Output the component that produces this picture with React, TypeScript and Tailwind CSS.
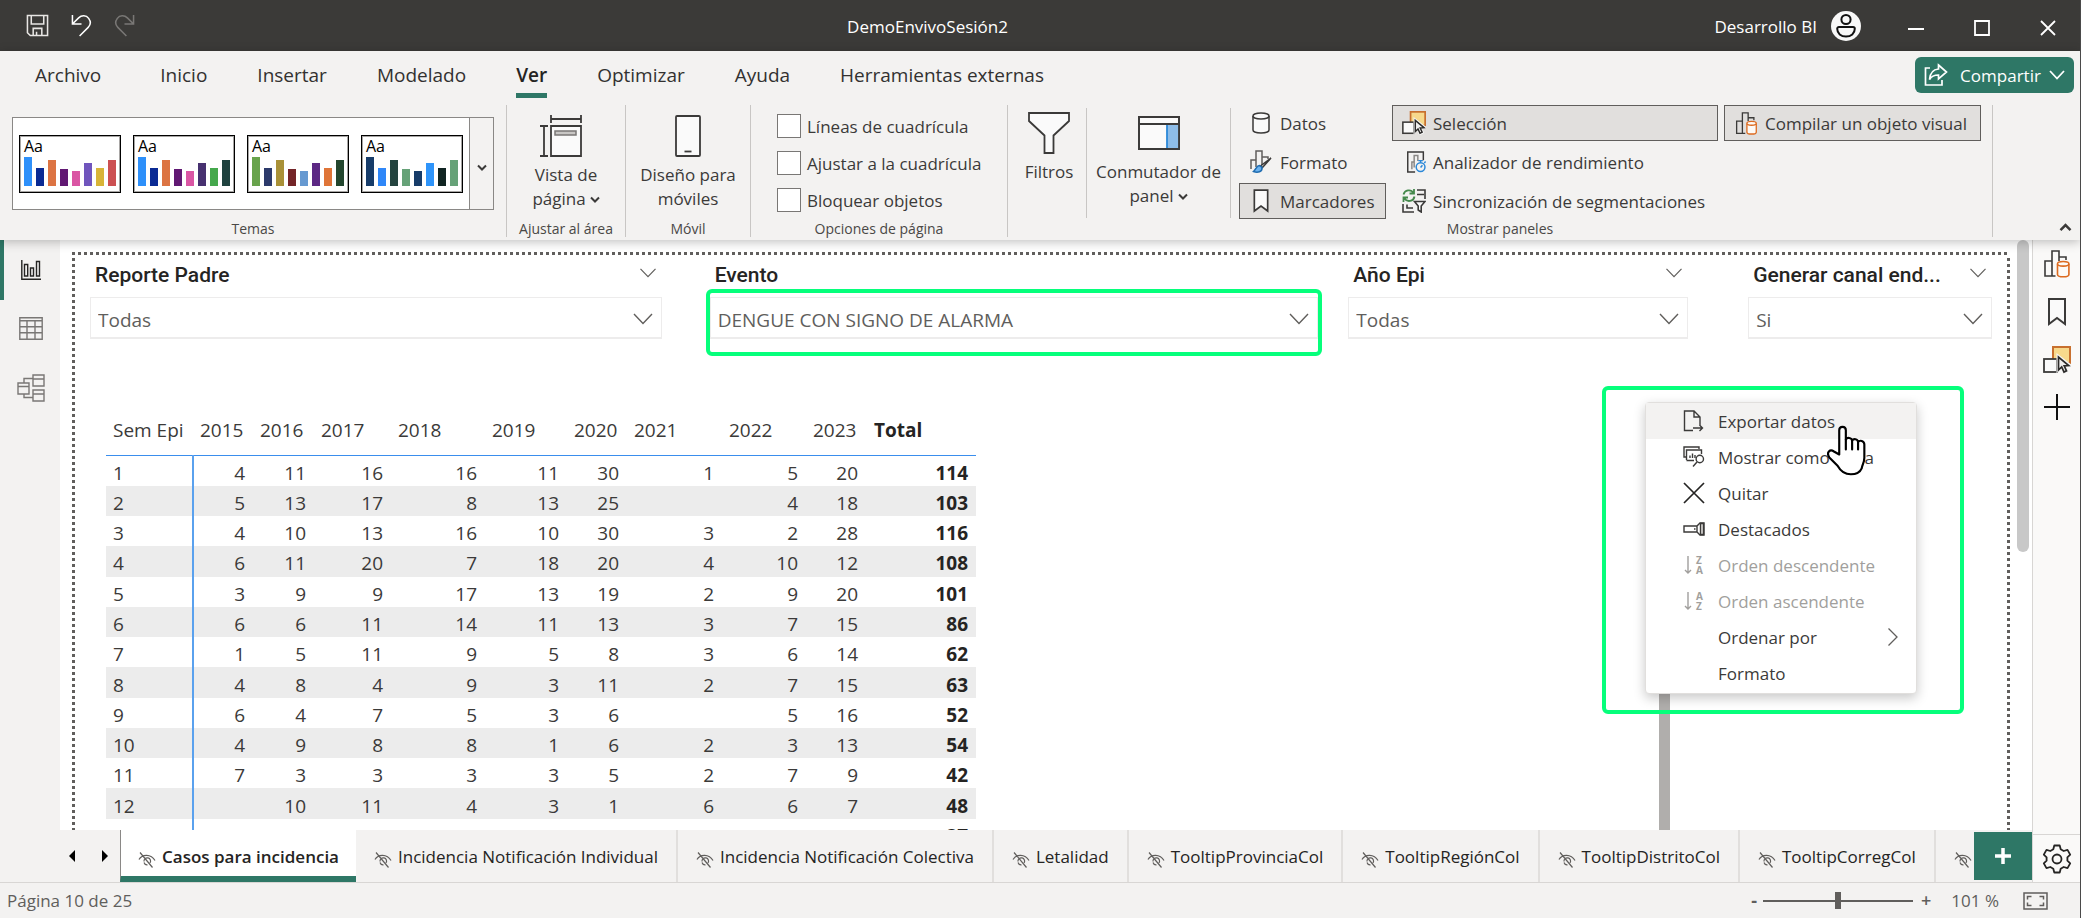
import type { ReactNode } from "react";

const THEMES = [
  ["#2e90fa", "#0a2a94", "#dc7443", "#611873", "#da56a4", "#7055bd", "#d8b438", "#cc5052"],
  ["#2e90fa", "#0a2a94", "#dc7443", "#611873", "#da56a4", "#473170", "#45a84c", "#1f423f"],
  ["#68a34c", "#2c3a6b", "#a99138", "#732428", "#6699d1", "#5c2884", "#df7538", "#23462e"],
  ["#173c69", "#2f87f8", "#24443f", "#66a278", "#173c69", "#2e94fa", "#102422", "#66a278"],
];
const BAR_HEIGHTS = [29, 18, 26, 17, 15, 23, 18, 26];

const MENU_TABS = ["Inicio", "Insertar", "Modelado", "Ver", "Optimizar", "Ayuda", "Herramientas externas"];

const YEARS = ["2015", "2016", "2017", "2018", "2019", "2020", "2021", "2022", "2023"];
const ROWS: string[][] = [
  ["1", "4", "11", "16", "16", "11", "30", "1", "5", "20", "114"],
  ["2", "5", "13", "17", "8", "13", "25", "", "4", "18", "103"],
  ["3", "4", "10", "13", "16", "10", "30", "3", "2", "28", "116"],
  ["4", "6", "11", "20", "7", "18", "20", "4", "10", "12", "108"],
  ["5", "3", "9", "9", "17", "13", "19", "2", "9", "20", "101"],
  ["6", "6", "6", "11", "14", "11", "13", "3", "7", "15", "86"],
  ["7", "1", "5", "11", "9", "5", "8", "3", "6", "14", "62"],
  ["8", "4", "8", "4", "9", "3", "11", "2", "7", "15", "63"],
  ["9", "6", "4", "7", "5", "3", "6", "", "5", "16", "52"],
  ["10", "4", "9", "8", "8", "1", "6", "2", "3", "13", "54"],
  ["11", "7", "3", "3", "3", "3", "5", "2", "7", "9", "42"],
  ["12", "", "10", "11", "4", "3", "1", "6", "6", "7", "48"],
  ["13", "1", "6", "8", "2", "4", "1", "1", "5", "9", "37"],
];

const PAGES = [
  "Incidencia Notificación Individual",
  "Incidencia Notificación Colectiva",
  "Letalidad",
  "TooltipProvinciaCol",
  "TooltipRegiónCol",
  "TooltipDistritoCol",
  "TooltipCorregCol",
];

function Caret({ className = "" }: { className?: string }) {
  return (
    <svg viewBox="0 0 10 8" className={className} fill="none" stroke="#3b3a39" strokeWidth="2">
      <path d="M1 1.500 5 5.500 9 1.500" />
    </svg>
  );
}

function Chevron({ className = "" }: { className?: string }) {
  return (
    <svg viewBox="0 0 20 12" className={className} fill="none" stroke="#605e5c" strokeWidth="1.400">
      <path d="M1 1 10 10.500 19 1" />
    </svg>
  );
}

function BookmarkIcon({ className = "" }: { className?: string }) {
  return (
    <svg viewBox="0 0 24 28" className={className} fill="#fafafa" stroke="#3b3a39" strokeWidth="2">
      <path d="M4 1h16v25l-8-6-8 6z" />
    </svg>
  );
}

function BuildIcon({ className = "" }: { className?: string }) {
  return (
    <svg viewBox="0 0 28 28" className={className} fill="none" stroke="#3b3a39" strokeWidth="1.600">
      <path d="M12.500 26H2V11h7M9 26V1h7v10M16 7h7v3" />
      <path d="M14.500 14v10.500c0 1.400 2.400 2.300 5.700 2.300s5.700-.9 5.700-2.300V14" fill="#fdfaf6" stroke="#dd6b20" />
      <ellipse cx="20.200" cy="13.800" rx="5.700" ry="2.300" fill="#fdfaf6" stroke="#dd6b20" />
    </svg>
  );
}

function SelectionIcon({ className = "" }: { className?: string }) {
  return (
    <svg viewBox="0 0 28 28" className={className}>
      <rect x="10" y="1" width="17" height="16" fill="#f7d98c" stroke="#c8702f" strokeWidth="2" />
      <rect x="1" y="13" width="13" height="13" fill="#fafafa" stroke="#3b3a39" strokeWidth="1.800" />
      <path d="M15 10v14l3.400-3 2.600 5.500 3-1.500-2.500-5.500 5-.5z" fill="#f5f5f4" stroke="#f5f5f4" strokeWidth="3" />
      <path d="M15.500 11v13l3.200-3 2.300 5 2.500-1.200-2.300-5 4.500-.3z" fill="#f0efee" stroke="#2b2a29" strokeWidth="1.700" />
    </svg>
  );
}

function HiddenPageIcon() {
  return (
    <svg viewBox="0 0 18 16" className="mt-1.5 h-4 w-[18px] shrink-0" fill="none" stroke="#605e5c" strokeWidth="1.200">
      <path d="M1 7.500C4 2 13 1.500 17 8.500M6 9.500a3.300 3.300 0 1 1 6 1.500M2 .5l12.500 15M6 10.500a3.300 3.300 0 0 0 3.500 2.300" />
    </svg>
  );
}

function Group({ label, className = "", children }: { label: string; className?: string; children: ReactNode }) {
  return (
    <section className={`flex h-[132px] flex-col justify-between border-r border-[#c8c6c4] ${className}`}>
      <div className="flex">{children}</div>
      <h2 className="text-center text-sm leading-4 text-[#4a4846]">{label}</h2>
    </section>
  );
}

function BigButton({ icon, children, className = "" }: { icon: ReactNode; children: ReactNode; className?: string }) {
  return (
    <button className={`flex flex-col items-center text-center text-[17px] leading-6 ${className}`}>
      {icon}
      <span>{children}</span>
    </button>
  );
}

function PanelButton({ icon, children, active, className = "" }: { icon: ReactNode; children: ReactNode; active?: boolean; className?: string }) {
  return (
    <button
      className={`flex h-9 items-center gap-1.5 border pl-2 text-[17px] whitespace-nowrap ${active ? "border-[#605e5c] bg-[#e1dfdd]" : "border-transparent"} ${className}`}
    >
      <span className="flex w-[26px] justify-center">{icon}</span>
      <span className="pt-0.5">{children}</span>
    </button>
  );
}

function Slicer({ id, title, value, className = "", highlighted }: { id: string; title: string; value: string; className?: string; highlighted?: boolean }) {
  return (
    <div className={className}>
      <div className="flex h-[42px] items-center justify-between pr-[5px] pl-[5px]">
        <label htmlFor={id} className="truncate font-[Roboto,sans-serif] text-[21px] font-medium text-[#252423]">
          {title}
        </label>
        {!highlighted && (
          <button aria-label={`Opciones de ${title}`}>
            <Chevron className="mb-1.5 h-2.5 w-[18px]" />
          </button>
        )}
      </div>
      <div className="relative">
        <select id={id} className="h-[42px] w-full appearance-none rounded-none border border-b-2 border-[#edecec] bg-white pt-1.5 pl-[7px] text-[19px] text-[#605e5c]">
          <option>{value}</option>
        </select>
        <Chevron className="pointer-events-none absolute top-4 right-[9px] h-3 w-5" />
        {highlighted && <div className="pointer-events-none absolute -inset-x-1 -top-2 h-[67px] rounded-md border-4 border-[#06ff7b]" />}
      </div>
    </div>
  );
}

function MenuItem({ icon, children, className = "", arrow }: { icon?: ReactNode; children: ReactNode; className?: string; arrow?: boolean }) {
  return (
    <button role="menuitem" className={`flex h-9 w-full items-center pl-[37px] text-left text-[17px] ${className}`}>
      <span className="flex w-[35px] shrink-0">{icon}</span>
      <span className="pt-0.5">{children}</span>
      {arrow && (
        <svg viewBox="0 0 12 20" className="mr-[17px] ml-auto h-5 w-3" fill="none" stroke="#605e5c" strokeWidth="1.300">
          <path d="m1.500 1.500 8.500 8.500-8.500 8.500" />
        </svg>
      )}
    </button>
  );
}

function SortIcon({ top, bottom }: { top: string; bottom: string }) {
  return (
    <span className="flex items-center gap-1 pl-px text-[#a19f9d]">
      <svg viewBox="0 0 8 20" className="h-5 w-2" fill="none" stroke="currentColor" strokeWidth="1.400">
        <path d="M4 1v17M1 15l3 3 3-3" />
      </svg>
      <span className="flex flex-col text-[10px] leading-[10px] font-bold">
        <span>{top}</span>
        <span>{bottom}</span>
      </span>
    </span>
  );
}

function HandCursor() {
  return (
    <svg viewBox="0 0 118 152" className="absolute top-[22px] left-[181px] h-[51px] w-[39px]" fill="#fff" stroke="#000" strokeWidth="6.500" strokeLinejoin="round" strokeLinecap="round">
      <path d="M37 88V15c0-14 20-14 20 0v28c3-8 18-6 19 3 4-7 17-5 18 4 5-6 19-4 19 8v40c0 14-6 20-8 32-6 14-18 18-33 18-18 0-30-8-40-26L7 97c-10-16 2-26 14-18z" />
      <path d="M57 43v30M76 46v27M94 50v23" />
    </svg>
  );
}

function TitleBar() {
  return (
    <header className="flex h-[51px] shrink-0 items-center bg-[#3b3a38] text-white">
      <div className="flex min-w-0 flex-[843] items-center gap-[22px] pl-[26px]">
        <button aria-label="Guardar">
          <svg viewBox="0 0 24 24" className="size-[23px]" fill="none" stroke="#e8e6e4" strokeWidth="1.600">
            <path d="M1.500 1.500h21v21h-18l-3-3zM5.500 1.500v9h13v-9M7.500 22v-7h9v7M11 22v-3.500" />
          </svg>
        </button>
        <button aria-label="Deshacer">
          <svg viewBox="0 0 22 24" className="h-[23px] w-[21px]" fill="none" stroke="#fff" strokeWidth="1.600">
            <path d="M1.500 1v9.500H11M1.500 10.500 8 4c3-3 8-3 10.500.5s2 7-.5 9.500l-9 9" />
          </svg>
        </button>
        <button aria-label="Rehacer" disabled>
          <svg viewBox="0 0 22 24" className="h-[23px] w-[21px]" fill="none" stroke="#797775" strokeWidth="1.600">
            <path d="M20.500 1v9.500H11M20.500 10.500 14 4C11 1 6 1 3.500 4.500s-2 7 .5 9.500l9 9" />
          </svg>
        </button>
      </div>
      <h1 className="pt-0.5 text-[17px]">DemoEnvivoSesión2</h1>
      <div className="flex min-w-0 flex-[1076] items-center justify-end pr-6">
        <span className="mr-3.5 pt-0.5 text-[17px]">Desarrollo BI</span>
        <svg viewBox="0 0 30 30" className="mr-[47px] size-[30px]" fill="none" stroke="#111" strokeWidth="2">
          <circle cx="15" cy="15" r="15" fill="#f8f8f8" stroke="none" />
          <circle cx="15" cy="8.500" r="4.600" />
          <path d="M8 16h14c1 0 1.800.8 1.800 1.800 0 4.700-3.800 7.700-8.800 7.700s-8.800-3-8.800-7.700c0-1 .8-1.800 1.800-1.800z" />
        </svg>
        <div className="flex items-center gap-[50px]">
          <button aria-label="Minimizar">
            <svg viewBox="0 0 16 16" className="mt-1 size-4" stroke="#fff" strokeWidth="2"><path d="M0 9h16" /></svg>
          </button>
          <button aria-label="Maximizar">
            <svg viewBox="0 0 16 16" className="mt-1 size-4" fill="none" stroke="#fff" strokeWidth="1.800"><path d="M1 1h14v14H1z" /></svg>
          </button>
          <button aria-label="Cerrar">
            <svg viewBox="0 0 16 16" className="mt-1 size-4" stroke="#fff" strokeWidth="1.800"><path d="m1 1 14 14M15 1 1 15" /></svg>
          </button>
        </div>
      </div>
    </header>
  );
}

function Ribbon() {
  return (
    <div className="relative z-10 shrink-0 bg-[#f3f2f1] text-[#3b3a39] shadow-[0_2px_10px_rgba(0,0,0,0.25)]">
      <nav className="flex h-[54px] items-start pt-1.5 pl-[35px] text-[19px] text-[#323130]">
        <button className="mr-[59px] h-[41px] pb-1">Archivo</button>
        <div className="flex gap-[50px]">
          {MENU_TABS.map((tab) => (
            <button key={tab} className={`h-[41px] border-[#2e7766] ${tab === "Ver" ? "border-b-5 font-semibold text-[#252423]" : "pb-1"}`}>
              {tab}
            </button>
          ))}
        </div>
        <button className="mr-1.5 ml-auto flex h-9 w-[159px] items-center justify-center rounded-md bg-[#2e7766] text-[17px] text-white">
          <svg viewBox="0 0 24 24" className="mr-3 size-6" fill="none" stroke="#fff" strokeWidth="1.700">
            <path d="M6 5H1.500v17H18v-5M14.500 2l8 7-8 7v-4c-4 0-7 1-9 4.500.5-6 3.500-10 9-10.500z" />
          </svg>
          <span className="pt-0.5">Compartir</span>
          <svg viewBox="0 0 16 10" className="ml-2 h-2.5 w-4" fill="none" stroke="#fff" strokeWidth="1.800"><path d="m1 1 7 7.500L15 1" /></svg>
        </button>
      </nav>

      <div className="flex h-[135px] items-start">
        <Group label="Temas" className="w-[507px]">
          <div className="mt-3 ml-3 flex h-[93px] w-[482px] border border-[#8a8886] bg-white">
            <div className="flex flex-1 items-center gap-3 pl-1.5">
              {THEMES.map((colors, t) => (
                <button key={t} aria-label={`Tema ${t + 1}`} className="flex h-[58px] w-[102px] flex-col justify-between border border-black bg-white px-1 pb-1.5 outline-1 -outline-offset-2 outline-[#a8a6a4]">
                  <span className="text-left text-[16px] leading-5 text-black">Aa</span>
                  <span className="flex items-end gap-1">
                    {colors.map((c, i) => (
                      <span key={i} className="w-2" style={{ height: BAR_HEIGHTS[i], background: c }} />
                    ))}
                  </span>
                </button>
              ))}
            </div>
            <button aria-label="Más temas" className="flex w-6 items-center justify-center border-l border-[#8a8886] bg-[#f3f2f1]">
              <Caret className="mt-2 h-2 w-2.5" />
            </button>
          </div>
        </Group>

        <Group label="Ajustar al área" className="w-[119px]">
          <BigButton
            className="w-full gap-1.5 pt-2.5"
            icon={
              <svg viewBox="0 0 32 42" className="h-[42px] w-8 overflow-visible" fill="none" stroke="#3b3a39" strokeWidth="1.800">
                <path d="M-6 11v30M-10 11h8M-10 41h8M1 4h30M1 0v8M31 0v8" />
                <path d="M1 11h30v30H1z" fill="#fafafa" />
                <path d="M5 16h21v4H5z" fill="#c8c6c4" stroke="#797775" strokeWidth="1.500" />
              </svg>
            }
          >
            Vista de
            <br />
            página
            <Caret className="ml-1 inline h-2 w-2.5" />
          </BigButton>
        </Group>

        <Group label="Móvil" className="w-[125px]">
          <BigButton
            className="w-full gap-1.5 pt-2.5"
            icon={
              <svg viewBox="0 0 26 42" className="h-[42px] w-[26px]" fill="#fafafa" stroke="#3b3a39" strokeWidth="1.800">
                <rect x="1" y="1" width="24" height="40" rx="1" />
                <path d="M9.500 36.500h7" />
              </svg>
            }
          >
            Diseño para
            <br />
            móviles
          </BigButton>
        </Group>

        <Group label="Opciones de página" className="w-[257px]">
          <div className="flex flex-col gap-[13px] pt-[9px] pl-[26px]">
            {["Líneas de cuadrícula", "Ajustar a la cuadrícula", "Bloquear objetos"].map((option) => (
              <label key={option} className="flex h-6 items-center gap-1.5 text-[17px] whitespace-nowrap">
                <input type="checkbox" className="size-6 appearance-none border border-[#797775] bg-white" />
                <span className="pt-0.5">{option}</span>
              </label>
            ))}
          </div>
        </Group>

        <Group label="Mostrar paneles" className="w-[985px]">
          <div className="mt-[3px] flex h-[110px] w-[79px] justify-center border-r border-[#c8c6c4]">
            <BigButton
              className="gap-1.5 self-start pt-1 pl-1"
              icon={
                <svg viewBox="0 0 42 42" className="h-[42px] w-[42px]" fill="#fafafa" stroke="#3b3a39" strokeWidth="1.800">
                  <path d="M1 1h40v8L25.500 23.500V41h-9V23.500L1 9z" />
                </svg>
              }
            >
              Filtros
            </BigButton>
          </div>
          <div className="mt-[3px] flex h-[110px] w-36 justify-center border-r border-[#c8c6c4]">
            <BigButton
              className="gap-2.5 self-start pt-2"
              icon={
                <svg viewBox="0 0 42 34" className="h-[34px] w-[42px]" fill="#fafafa" stroke="#3b3a39" strokeWidth="1.800">
                  <path d="M1 1h40v32H1z" />
                  <path d="M29 8h12v25H29z" fill="#8ebde8" stroke="none" />
                  <path d="M29 8v25" stroke="#2b88d8" />
                  <path d="M1 1h40v7H1zM41 8v25H1V8" fill="none" />
                </svg>
              }
            >
              Conmutador de
              <br />
              panel
              <Caret className="ml-1 inline h-2 w-2.5" />
            </BigButton>
          </div>
          <div className="ml-2 grid grid-cols-[147px_326px_257px] gap-x-1.5 gap-y-[3px]">
            <PanelButton
              icon={
                <svg viewBox="0 0 18 22" className="h-[22px] w-[18px]" fill="#fafafa" stroke="#3b3a39" strokeWidth="1.500">
                  <path d="M1 4v14c0 1.700 3.600 3 8 3s8-1.300 8-3V4" />
                  <ellipse cx="9" cy="4" rx="8" ry="3" />
                </svg>
              }
            >
              Datos
            </PanelButton>
            <PanelButton active icon={<SelectionIcon className="size-6" />}>Selección</PanelButton>
            <PanelButton active icon={<BuildIcon className="size-[23px]" />}>Compilar un objeto visual</PanelButton>
            <PanelButton
              icon={
                <svg viewBox="0 0 22 24" className="h-6 w-[22px]" fill="none" stroke="#3b3a39" strokeWidth="1.500">
                  <path d="M1 19V10h5M6 17V1h6v14M12 7h6v2" stroke="#605e5c" />
                  <path d="m21 8-8.500 9.500-2-1.500z" fill="#e1dfdd" />
                  <path d="M9.500 15.500c-3 0-3 3.500-6 6 4 1.500 9 .5 8.500-4z" fill="#6cb2ee" stroke="#1f6cb0" />
                </svg>
              }
            >
              Formato
            </PanelButton>
            <PanelButton
              className="col-span-2"
              icon={
                <svg viewBox="0 0 24 24" className="ml-1 size-6" fill="none" stroke="#3b3a39" strokeWidth="1.600">
                  <path d="M11 23H3V1h17v9" />
                  <path d="M7.500 20v-8H10M10 18V5h4v6" stroke="#8a8886" />
                  <circle cx="17" cy="17.500" r="4.800" stroke="#2b88d8" fill="#f3f2f1" />
                  <path d="M17 12.500v-2M14.500 10.500h5M17 18l2-2.500M21 13l1.500-1.500" stroke="#2b88d8" />
                </svg>
              }
            >
              Analizador de rendimiento
            </PanelButton>
            <PanelButton active icon={<BookmarkIcon className="h-[26px] w-5" />}>Marcadores</PanelButton>
            <PanelButton
              className="col-span-2"
              icon={
                <svg viewBox="0 0 24 24" className="size-6" fill="none" stroke="#3b3a39" strokeWidth="1.600">
                  <path d="M1 15v8h11M5 15.500v3.500h6M15 1h8v9M15 5.500h7" />
                  <path d="M12.500 12.500H23l-3.800 4.500v6l-3-2v-4z" fill="#fafafa" />
                  <path d="M1.500 5.500A5.500 5.500 0 0 1 11.500 4M12 0v4.500H7.500M12.500 7.500A5.500 5.500 0 0 1 2.500 9.500M1.500 13V8.500H6" stroke="#45894c" strokeWidth="1.800" />
                </svg>
              }
            >
              Sincronización de segmentaciones
            </PanelButton>
          </div>
        </Group>
        <button aria-label="Contraer la cinta" className="mr-2 ml-auto self-end pb-2">
          <Caret className="h-2.5 w-[13px] rotate-180" />
        </button>
      </div>
    </div>
  );
}

function ViewRail() {
  return (
    <nav className="flex w-[60px] shrink-0 flex-col bg-[#f3f2f1]">
      <button aria-label="Vista de informe" className="flex h-[60px] items-center border-l-4 border-[#2e7766] pl-[17px]">
        <svg viewBox="0 0 20 20" className="size-5" fill="none" stroke="#252423" strokeWidth="1.400">
          <path d="M.8 0v19.200H20M3.500 4.500h3.200V16H3.500zM9.500 8h3V16h-3zM15.500 1.500h3V16h-3z" />
        </svg>
      </button>
      <button aria-label="Vista de tabla" className="flex h-14 items-center pl-[19px]">
        <svg viewBox="0 0 24 23" className="h-[23px] w-6" fill="none" stroke="#797775" strokeWidth="1.400">
          <path d="M.8.8h22.400v21.400H.8zM.8 3.800h22.400M.8 9.800h22.400M.8 15.800h22.400M8 3.800v18.400M16 3.800v18.400" />
        </svg>
      </button>
      <button aria-label="Vista de modelo" className="flex h-16 items-center pl-[17px]">
        <svg viewBox="0 0 28 28" className="size-7" fill="none" stroke="#797775" strokeWidth="1.400">
          <path d="M1 9h11v11H1zM1 12.500h11M16 1h11v11H16zM16 5h11M16 16h11v11H16zM16 20h11M7 9V4.500h9M7 20v3.500h9" />
        </svg>
      </button>
    </nav>
  );
}

function IncidenceTable() {
  return (
    <table className="h-[444px] w-[870px] table-fixed border-collapse text-[19px] text-[#3b3a39]">
      <colgroup>
        <col className="w-[87px]" />
        <col className="w-[60px]" />
        <col className="w-[61px]" />
        <col className="w-[77px]" />
        <col className="w-[94px]" />
        <col className="w-[82px]" />
        <col className="w-[60px]" />
        <col className="w-[95px]" />
        <col className="w-[84px]" />
        <col className="w-[60px]" />
        <col className="w-[110px]" />
      </colgroup>
      <thead>
        <tr className="h-[50px] border-b border-[#3a8eed] text-left">
          <th scope="col" className="pl-[7px] font-normal whitespace-nowrap">Sem Epi</th>
          {YEARS.map((year) => (
            <th key={year} scope="col" className="pl-[7px] font-normal">{year}</th>
          ))}
          <th scope="col" className="pl-2 font-bold text-[#252423]">Total</th>
        </tr>
      </thead>
      <tbody>
        {ROWS.map((row) => (
          <tr key={row[0]} className="leading-6 even:bg-[#ececec]">
            <th scope="row" className="border-r-2 border-[#5aa1ee] pt-1 pl-[7px] text-left font-normal">{row[0]}</th>
            {row.slice(1, 10).map((value, i) => (
              <td key={i} className="pt-1 pr-2 text-right">{value}</td>
            ))}
            <td className="pt-1 pr-2 text-right font-bold text-[#252423]">{row[10]}</td>
          </tr>
        ))}
      </tbody>
    </table>
  );
}

function ContextMenu() {
  const stroke = { fill: "none", stroke: "#3b3a39", strokeWidth: 1.4 };
  return (
    <div className="absolute top-[131px] right-[43px] h-[328px] w-[362px] rounded-md border-4 border-[#06ff7b]">
      <div role="menu" className="absolute top-3 left-[39px] h-[292px] w-[272px] rounded-sm border border-[#e1dfdd] bg-white text-[#3b3a39] shadow-[0_4px_12px_rgba(0,0,0,0.22)]">
        <MenuItem
          className="bg-[#f3f2f1]"
          icon={
            <svg viewBox="0 0 21 22" className="h-[22px] w-[21px]" {...stroke}>
              <path d="M10 20.500H1.500V1H11l6 6v8M11 1v6h6M10 18h9M16.500 15l3 3-3 3" />
            </svg>
          }
        >
          Exportar datos
        </MenuItem>
        <MenuItem
          icon={
            <svg viewBox="0 0 22 22" className="size-[22px]" {...stroke}>
              <path d="M3 11H1V1h15v2M3.500 14V4h15v4M11 14.500H3.500M7 12V9.500M9.500 12V7.500M12 12V9" />
              <circle cx="16.800" cy="13" r="3.700" />
              <path d="m14 16-4 4.500" />
            </svg>
          }
        >
          Mostrar como tabla
        </MenuItem>
        <MenuItem icon={<svg viewBox="0 0 22 22" className="size-[22px]" fill="none" stroke="#252423" strokeWidth="1.700"><path d="m1 1 20 20M21 1 1 21" /></svg>}>Quitar</MenuItem>
        <MenuItem
          icon={
            <svg viewBox="0 0 22 14" className="h-3.5 w-[22px]" {...stroke}>
              <path d="M1 4h13v6H1zM14 4l3-3h4v12h-4l-3-3z" />
              <path d="M17.500 1.500h3v11h-3z" fill="#e1dfdd" />
              <path d="M11 7h1.500" />
            </svg>
          }
        >
          Destacados
        </MenuItem>
        <MenuItem className="text-[#a19f9d]" icon={<SortIcon top="Z" bottom="A" />}>Orden descendente</MenuItem>
        <MenuItem className="text-[#a19f9d]" icon={<SortIcon top="A" bottom="Z" />}>Orden ascendente</MenuItem>
        <MenuItem arrow>Ordenar por</MenuItem>
        <MenuItem>Formato</MenuItem>
        <HandCursor />
      </div>
    </div>
  );
}

function Canvas() {
  return (
    <main className="flex min-w-0 flex-1 bg-white pt-3 pl-3">
      <div className="flex min-w-0 flex-1 flex-col">
        <div className="h-[3px] shrink-0 bg-[repeating-linear-gradient(90deg,#605e5c_0_3px,transparent_3px_6px)]" />
        <div className="flex min-h-0 flex-1">
          <div className="w-[3px] shrink-0 bg-[repeating-linear-gradient(180deg,transparent_0_3px,#605e5c_3px_6px)]" />
          <div className="relative min-w-0 flex-1 overflow-hidden">
            <div className="flex px-[15px]">
              <Slicer id="padre" title="Reporte Padre" value="Todas" className="min-w-0 flex-[572]" />
              <Slicer id="evento" title="Evento" value="DENGUE CON SIGNO DE ALARMA" highlighted className="ml-12 min-w-0 flex-[609]" />
              <Slicer id="anio" title="Año Epi" value="Todas" className="ml-[30px] min-w-0 flex-[340]" />
              <Slicer id="canal" title="Generar canal end..." value="Si" className="ml-[60px] min-w-0 flex-[244]" />
            </div>
            <div className="pt-[66px] pl-[31px]">
              <IncidenceTable />
            </div>
            <div className="absolute right-[337px] bottom-0 h-40 w-[11px] bg-[#b0aeac]" />
            <ContextMenu />
          </div>
          <div className="w-[3px] shrink-0 bg-[repeating-linear-gradient(180deg,transparent_0_3px,#605e5c_3px_6px)]" />
        </div>
      </div>
      <div className="-mt-3 mr-[3px] ml-[7px] h-[312px] w-3 rounded-full bg-[#c8c8c8]" />
    </main>
  );
}

function PageTabs() {
  return (
    <div className="flex h-[52px] shrink-0 bg-[#f3f2f1] text-[#252423]">
      <div className="flex w-[120px] shrink-0 items-center gap-[27px] pl-[69px]">
        <button aria-label="Página anterior">
          <svg viewBox="0 0 6 12" className="h-3 w-1.5"><path d="M6 0v12L0 6z" /></svg>
        </button>
        <button aria-label="Página siguiente">
          <svg viewBox="0 0 6 12" className="h-3 w-1.5"><path d="M0 0v12l6-6z" /></svg>
        </button>
      </div>
      <div className="flex min-w-0 flex-1 overflow-hidden text-[17px] whitespace-nowrap">
        <button className="flex shrink-0 items-center gap-1.5 border-b-6 border-l border-b-[#2e7766] border-l-[#8a8886] bg-white px-[17px] pt-2 font-semibold">
          <HiddenPageIcon />
          Casos para incidencia
        </button>
        {PAGES.map((page) => (
          <button key={page} className="flex shrink-0 items-center gap-1.5 border-r-2 border-[#e1dfdd] px-[18px] pt-0.5">
            <HiddenPageIcon />
            {page}
          </button>
        ))}
        <button aria-label="Página oculta" className="flex shrink-0 items-center pt-0.5 pl-[18px]">
          <HiddenPageIcon />
        </button>
      </div>
      <button aria-label="Nueva página" className="my-0.5 flex w-[58px] shrink-0 items-center justify-center bg-[#2e7766]">
        <svg viewBox="0 0 16 16" className="size-4" stroke="#fff" strokeWidth="3.500"><path d="M8 0v16M0 8h16" /></svg>
      </button>
    </div>
  );
}

function PaneRail() {
  return (
    <aside className="flex w-12 shrink-0 flex-col items-center border-l border-[#d8d6d4] bg-[#faf9f8] pt-2.5">
      <div className="flex flex-col items-center gap-5">
        <button aria-label="Compilar"><BuildIcon className="size-7" /></button>
        <button aria-label="Marcadores"><BookmarkIcon className="h-7 w-6" /></button>
        <button aria-label="Selección"><SelectionIcon className="size-7" /></button>
        <button aria-label="Agregar panel">
          <svg viewBox="0 0 26 26" className="size-[26px]" stroke="#111" strokeWidth="2"><path d="M13 0v26M0 13h26" /></svg>
        </button>
      </div>
      <button aria-label="Configuración" className="mt-auto flex h-12 w-full items-center justify-center border-t border-[#d8d6d4]">
        <svg viewBox="0 0 30 30" className="size-[30px]" fill="none" stroke="#252423" strokeWidth="1.800" strokeLinejoin="round">
          <path d="M12.300 1.500h5.400l1 3.800 3 1.700 3.800-1.100 2.700 4.700-2.800 2.700v3.400l2.800 2.700-2.700 4.700-3.800-1.100-3 1.700-1 3.800h-5.400l-1-3.800-3-1.700-3.800 1.100-2.700-4.700 2.800-2.700v-3.400L1.800 10.600l2.700-4.700L8.300 7l3-1.700z" />
          <circle cx="15" cy="15" r="4.500" />
        </svg>
      </button>
    </aside>
  );
}

function StatusBar() {
  return (
    <footer className="flex h-9 shrink-0 items-center border-t border-[#d8d6d4] bg-[#f3f2f1] pr-8 pl-[7px] text-[17px] text-[#605e5c]">
      <span>Página 10 de 25</span>
      <div className="ml-auto flex items-center">
        <button aria-label="Alejar" className="mr-1.5 text-[18px] font-bold">-</button>
        <input
          type="range"
          aria-label="Zoom"
          className="h-[17px] w-[150px] appearance-none bg-[linear-gradient(#605e5c,#605e5c)] bg-[length:100%_2px] bg-center bg-no-repeat [&::-webkit-slider-thumb]:h-[17px] [&::-webkit-slider-thumb]:w-1.5 [&::-webkit-slider-thumb]:appearance-none [&::-webkit-slider-thumb]:bg-[#605e5c]"
        />
        <button aria-label="Acercar" className="mr-5 ml-2 text-[18px] font-semibold">+</button>
        <span className="mr-6">101 %</span>
        <button aria-label="Ajustar a la página">
          <svg viewBox="0 0 25 18" className="h-[18px] w-[25px]" fill="none" stroke="#605e5c" strokeWidth="1.500">
            <path d="M1 1h23v16H1z" />
            <path d="M4.500 7.500v-3h4M16.500 4.500h4v3M20.500 10.500v3h-4M8.500 13.500h-4v-3" />
          </svg>
        </button>
      </div>
    </footer>
  );
}

export default function App() {
  return (
    <div className="flex h-screen flex-col overflow-hidden border-r border-[#4a4a4a] bg-[#f3f2f1] font-['Open_Sans','Noto_Sans',sans-serif]">
      <TitleBar />
      <Ribbon />
      <div className="flex min-h-0 flex-1">
        <div className="flex min-w-0 flex-1 flex-col">
          <div className="flex min-h-0 flex-1 overflow-hidden">
            <ViewRail />
            <Canvas />
          </div>
          <PageTabs />
        </div>
        <PaneRail />
      </div>
      <StatusBar />
    </div>
  );
}
